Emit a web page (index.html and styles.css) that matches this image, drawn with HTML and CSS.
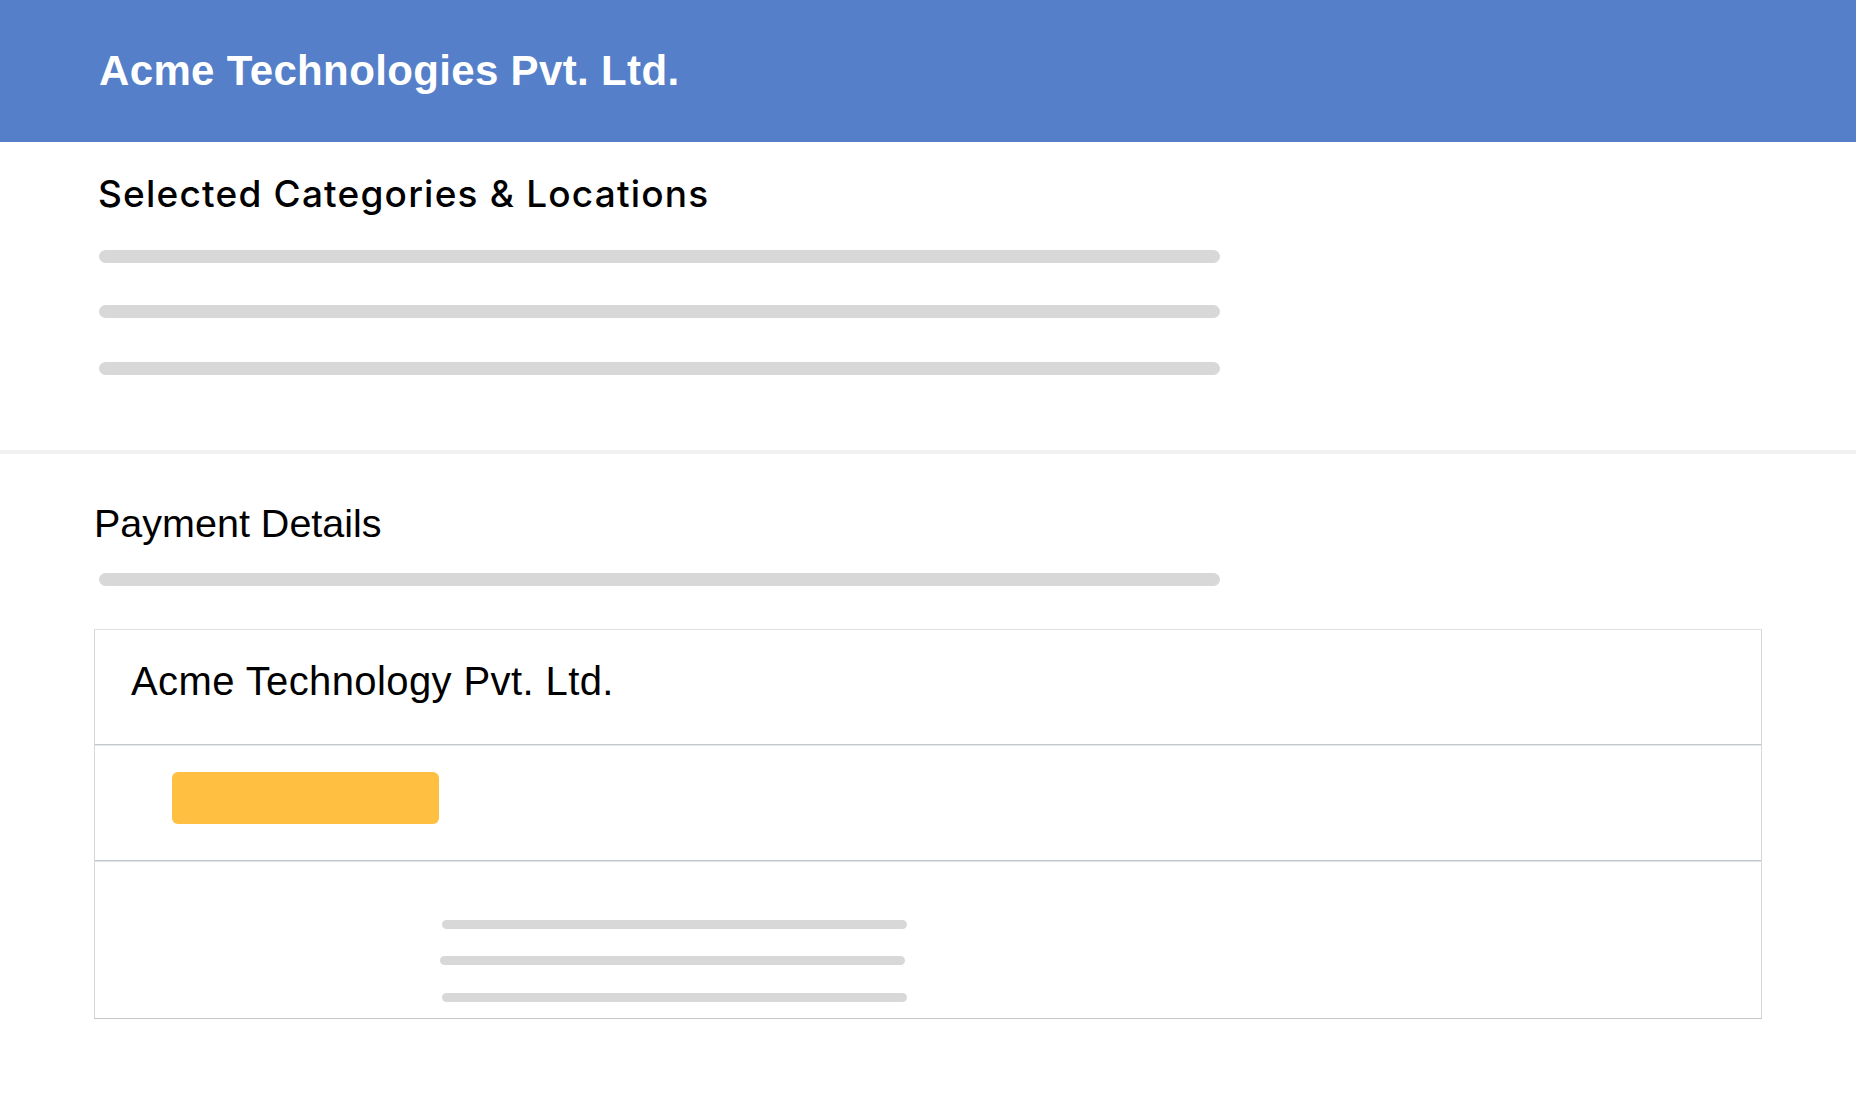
FILE: index.html
```html
<!DOCTYPE html>
<html lang="en">
<head>
<meta charset="utf-8">
<title>Acme Technologies Pvt. Ltd.</title>
<link rel="stylesheet" href="styles.css">
</head>
<body>
  <header class="topbar">
    <h1 class="brand">Acme Technologies Pvt. Ltd.</h1>
  </header>

  <section class="selected">
    <h2 class="selected-title">Selected Categories &amp; Locations</h2>
    <div class="skel skel-wide first"></div>
    <div class="skel skel-wide second"></div>
    <div class="skel skel-wide third"></div>
  </section>

  <hr class="divider">

  <section class="payment">
    <h2 class="payment-title">Payment Details</h2>
    <div class="skel skel-wide pay-bar"></div>

    <div class="card">
      <div class="card-row row-name">
        <span class="company">Acme Technology Pvt. Ltd.</span>
      </div>
      <div class="card-row row-action">
        <div class="btn-yellow"></div>
      </div>
      <div class="card-row row-lines">
        <div class="skel skel-short l1"></div>
        <div class="skel skel-short l2"></div>
        <div class="skel skel-short l3"></div>
      </div>
    </div>
  </section>
</body>
</html>
```

FILE: styles.css
```css
html, body {
  margin: 0;
  padding: 0;
  background: #ffffff;
}

body {
  font-family: "Liberation Sans", Arial, Helvetica, sans-serif;
  color: #000000;
}

.topbar {
  height: 142px;
  background: #5580c9;
  display: flex;
  align-items: center;
  padding-left: 99px;
  box-sizing: border-box;
}

.brand {
  margin: 0;
  font-size: 42px;
  line-height: 42px;
  font-weight: 700;
  letter-spacing: 0.35px;
  color: #ffffff;
}

.selected {
  padding: 33px 0 75px 98px;
}

.selected-title {
  margin: 0 0 38px 0;
  font-family: Inter, "Liberation Sans", Arial, sans-serif;
  font-size: 37px;
  line-height: 37px;
  font-weight: 500;
  letter-spacing: 1.2px;
}

.skel {
  background: #d8d8d8;
}

.skel-wide {
  width: 1121px;
  height: 13px;
  border-radius: 7px;
  margin-left: 1px;
}

.skel-wide.second {
  margin-top: 42px;
}

.skel-wide.third {
  margin-top: 44px;
}

.divider {
  margin: 0;
  border: 0;
  height: 4px;
  background: #f1f1f1;
}

.payment {
  padding: 50px 0 0 94px;
}

.payment-title {
  margin: 0 0 30px 0;
  font-size: 39.5px;
  line-height: 39px;
  font-weight: 400;
}

.pay-bar {
  margin-left: 5px;
}

.card {
  margin-top: 43px;
  width: 1668px;
  display: flex;
  flex-direction: column;
}

.card-row {
  border: 1px solid #d3d7da;
  border-bottom-color: #c3c8cc;
}

.row-name {
  box-sizing: border-box;
  height: 116px;
  padding: 31px 0 0 36px;
  border-top-color: #dfe2e5;
}

.company {
  display: block;
  font-size: 40px;
  line-height: 40px;
  letter-spacing: 0.4px;
}

.row-action {
  height: 116px;
  box-sizing: border-box;
  padding: 26px 0 0 77px;
  border-top-color: #e6e8ea;
}

.btn-yellow {
  width: 267px;
  height: 52px;
  border-radius: 6px;
  background: #ffbf40;
}

.row-lines {
  height: 158px;
  box-sizing: border-box;
  padding: 58px 0 0 347px;
  border-top-color: #dfe3e6;
}

.skel-short {
  width: 465px;
  height: 9px;
  border-radius: 5px;
}

.skel-short.l2 {
  margin-top: 27px;
  margin-left: -2px;
}

.skel-short.l3 {
  margin-top: 28px;
}
```
